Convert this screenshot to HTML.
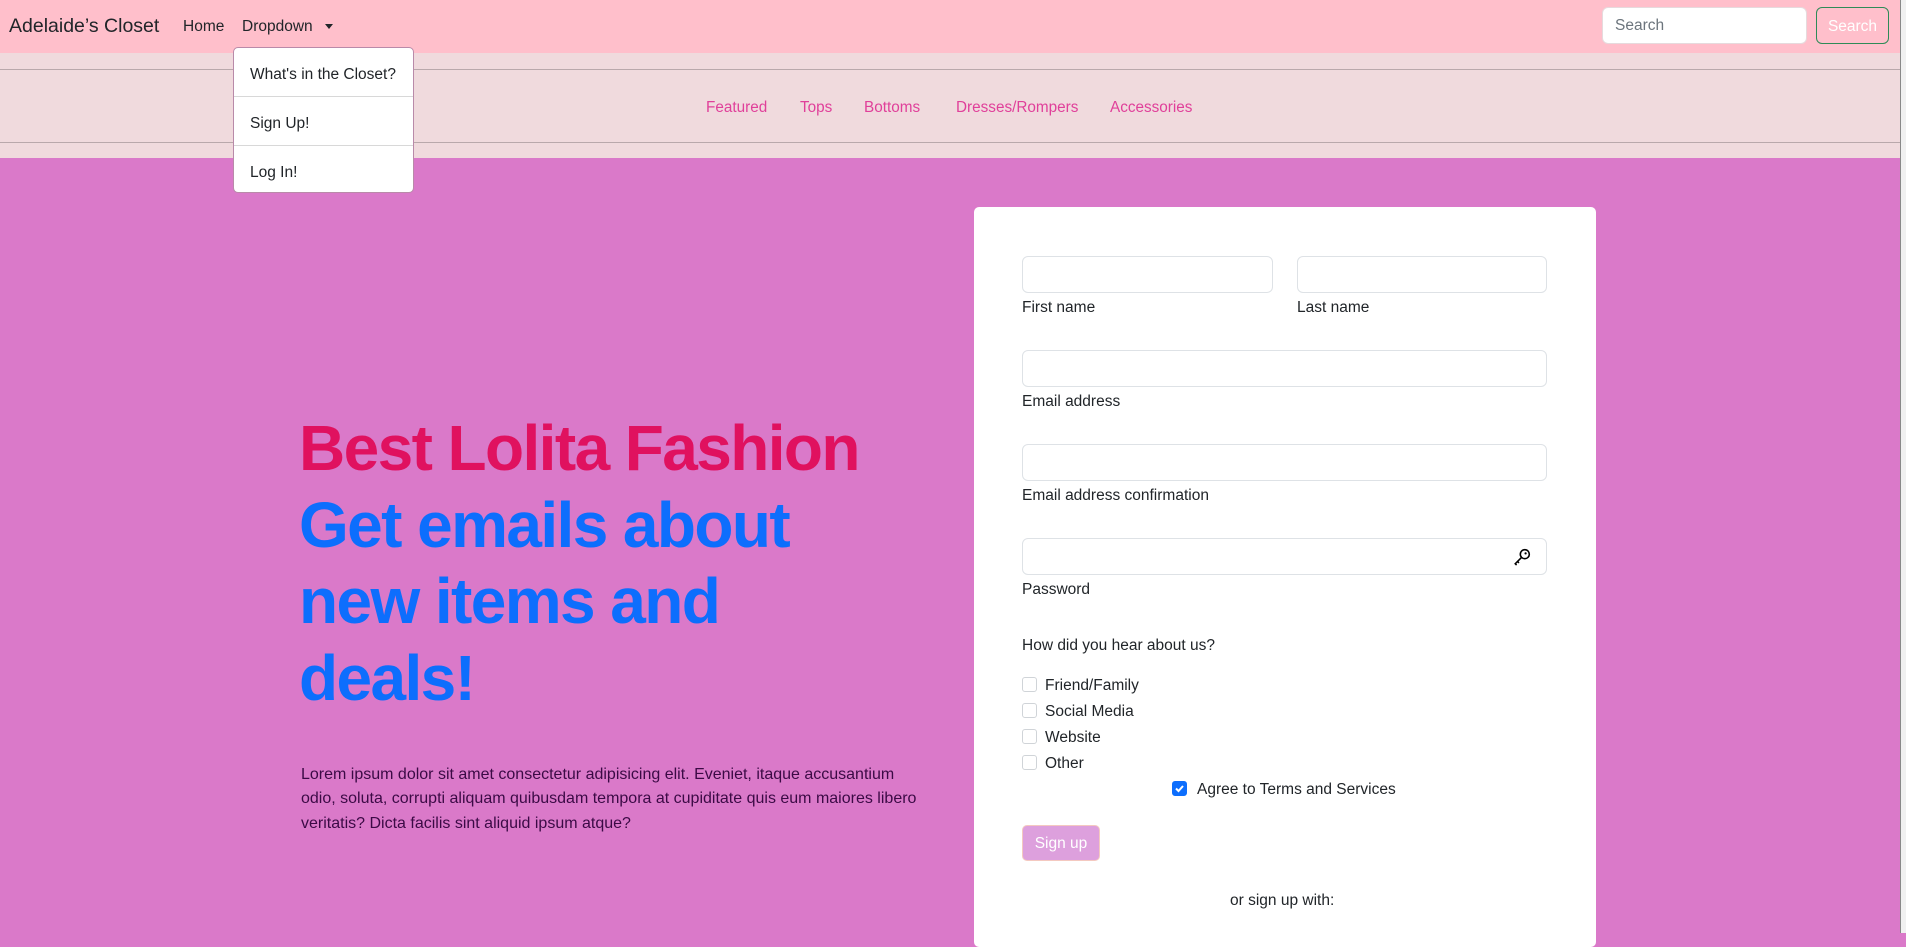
<!DOCTYPE html>
<html><head><meta charset="utf-8"><style>
*{box-sizing:border-box;margin:0;padding:0}
body{width:1906px;height:933px;overflow:hidden;font-family:"Liberation Sans",sans-serif;background:#da79c9;position:relative;color:#212529}
.abs{position:absolute;white-space:nowrap}
.nav{position:absolute;left:0;top:0;width:1900px;height:53px;background:#ffbfcb}
.sub{position:absolute;left:0;top:53px;width:1900px;height:105px;background:#f0dadd}
.line{position:absolute;left:0;width:1900px;height:1px;background:#b9a8ab}
.sl{color:#e0409a;font-size:15.3px;top:99px}
.dd{position:absolute;left:233px;top:47px;width:181px;height:146px;background:#fff;border:1px solid #b98aa9;border-radius:5px}
.dd div{position:absolute;left:0;width:100%;height:1px;background:#d8d8d8}
.dd span{position:absolute;left:16px;font-size:15.5px;color:#212529}
.card{position:absolute;left:974px;top:207px;width:622px;height:740px;background:#fff;border-radius:5px}
.in{position:absolute;border:1px solid #dee2e6;border-radius:6px;background:#fff;height:37px}
.lb{position:absolute;font-size:15.5px;white-space:nowrap}
.cb{position:absolute;width:15px;height:15px;border:1px solid #d0d4d8;border-radius:3px;background:#fff}
h1{position:absolute;left:299px;top:410px;font-size:64px;line-height:76.6px;font-weight:bold;letter-spacing:-1.6px;white-space:nowrap}
</style></head><body>
<div class="nav"></div>
<div class="abs" style="left:9px;top:15px;font-size:19.5px;color:#212529">Adelaide’s Closet</div>
<div class="abs" style="left:183px;top:18px;font-size:15.5px">Home</div>
<div class="abs" style="left:242px;top:18px;font-size:15.5px">Dropdown</div>
<div class="abs" style="left:325px;top:24px;width:0;height:0;border-left:4.5px solid transparent;border-right:4.5px solid transparent;border-top:5px solid #212529"></div>
<div class="abs" style="left:1602px;top:7px;width:205px;height:37px;background:#fff;border:1px solid #e6dadd;border-radius:6px"></div>
<div class="abs" style="left:1615px;top:17px;font-size:15.5px;color:#6c757d">Search</div>
<div class="abs" style="left:1816px;top:7px;width:73px;height:37px;border:1px solid #2e8b57;border-radius:6px;color:#fff;font-size:15.5px;text-align:center;line-height:37px">Search</div>
<div class="abs" style="left:1900px;top:0;width:6px;height:933px;background:#f0f0f0;border-left:1px solid #888"></div>
<div class="sub"></div>
<div class="line" style="top:69px"></div>
<div class="line" style="top:142px"></div>
<div class="abs sl" style="left:706px">Featured</div>
<div class="abs sl" style="left:800px">Tops</div>
<div class="abs sl" style="left:864px">Bottoms</div>
<div class="abs sl" style="left:956px">Dresses/Rompers</div>
<div class="abs sl" style="left:1110px">Accessories</div>
<div class="dd">
<span style="top:18px">What's in the Closet?</span>
<div style="top:48px"></div>
<span style="top:67px">Sign Up!</span>
<div style="top:97px"></div>
<span style="top:116px">Log In!</span>
</div>
<h1><span style="color:#e0115f">Best Lolita Fashion</span><br><span style="color:#0d6efd">Get emails about<br>new items and<br>deals!</span></h1>
<div class="abs" style="left:301px;top:763px;font-size:16px;line-height:24.3px;color:#3b0a45">Lorem ipsum dolor sit amet consectetur adipisicing elit. Eveniet, itaque accusantium<br>odio, soluta, corrupti aliquam quibusdam tempora at cupiditate quis eum maiores libero<br>veritatis? Dicta facilis sint aliquid ipsum atque?</div>
<div class="card"></div>
<div class="in" style="left:1022px;top:256px;width:251px"></div>
<div class="in" style="left:1297px;top:256px;width:250px"></div>
<div class="lb" style="left:1022px;top:299px">First name</div>
<div class="lb" style="left:1297px;top:299px">Last name</div>
<div class="in" style="left:1022px;top:350px;width:525px"></div>
<div class="lb" style="left:1022px;top:393px">Email address</div>
<div class="in" style="left:1022px;top:444px;width:525px"></div>
<div class="lb" style="left:1022px;top:487px">Email address confirmation</div>
<div class="in" style="left:1022px;top:538px;width:525px"></div>
<svg class="abs" style="left:1513px;top:548px" width="18" height="18" viewBox="0 0 16 16"><circle cx="10.5" cy="5.5" r="4" fill="none" stroke="#000" stroke-width="1.4"/><circle cx="11.2" cy="4.8" r="1" fill="#000"/><path d="M7.7 8.3L2 14l1.2 1.2M4 12l1.3 1.3" fill="none" stroke="#000" stroke-width="1.4"/></svg>
<div class="lb" style="left:1022px;top:581px">Password</div>
<div class="lb" style="left:1022px;top:637px">How did you hear about us?</div>
<div class="cb" style="left:1022px;top:677px"></div><div class="lb" style="left:1045px;top:677px">Friend/Family</div>
<div class="cb" style="left:1022px;top:703px"></div><div class="lb" style="left:1045px;top:703px">Social Media</div>
<div class="cb" style="left:1022px;top:729px"></div><div class="lb" style="left:1045px;top:729px">Website</div>
<div class="cb" style="left:1022px;top:755px"></div><div class="lb" style="left:1045px;top:755px">Other</div>
<div class="cb" style="left:1172px;top:781px;background:#0d6efd;border-color:#0d6efd"><svg width="13" height="13" viewBox="0 0 13 13" style="position:absolute;left:0;top:0"><path d="M3 6.5l2.5 2.5 4.5-5" fill="none" stroke="#fff" stroke-width="2"/></svg></div>
<div class="lb" style="left:1197px;top:781px">Agree to Terms and Services</div>
<div class="abs" style="left:1022px;top:825px;width:78px;height:36px;background:#dda0dd;border:1px solid #f4c9c0;border-radius:5px;color:#fff;font-size:15.5px;text-align:center;line-height:36px">Sign up</div>
<div class="lb" style="left:1230px;top:892px">or sign up with:</div>
</body></html>
